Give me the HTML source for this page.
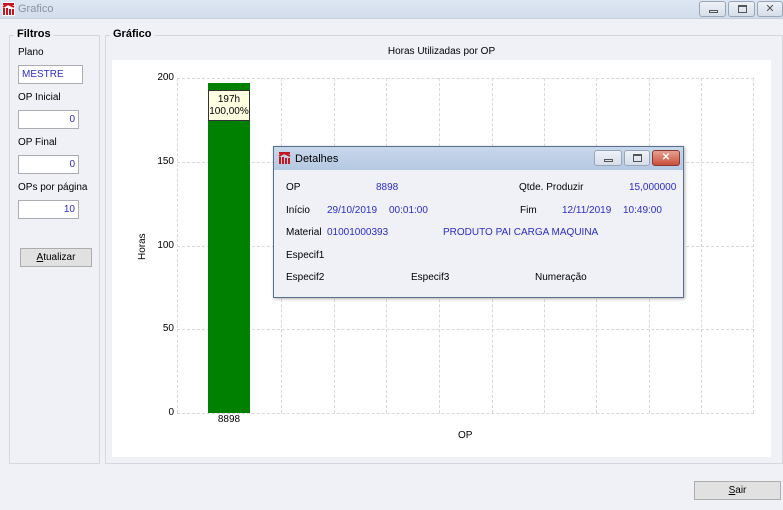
<!DOCTYPE html>
<html><head><style>
*{box-sizing:border-box;margin:0;padding:0}
body{width:783px;height:510px;background:#f0f1f7;font-family:"Liberation Sans",sans-serif;font-size:10px;color:#000;position:relative;overflow:hidden}
.a{position:absolute}
.tb{left:0;top:0;width:783px;height:19px;background:linear-gradient(#dde6f2,#d2ddec);border-bottom:1px solid #c5cfdc}
.wb{border:1px solid #9aa6b8;border-radius:3px;background:linear-gradient(#eef2f8,#d6dee9);height:16px}
.grp{border:1px solid #d5d7dc}
.lg{background:#f0f1f7;font-weight:bold;padding:0 3px;font-size:11px}
.inp{background:#fff;border:1px solid #abadb3;color:#2c2cc8;height:19px;line-height:17px;padding:0 3px}
.btn{background:#e1e1e1;border:1px solid #adadad;text-align:center;height:19px;line-height:17px}
.gv{border-left:1px dashed #d8d8d8;width:0}
.gh{border-top:1px dashed #d8d8d8;height:0}
.v{color:#2c2cc8}
</style></head><body>
<div class="a tb"></div>
<svg class="a" style="left:2px;top:2px" width="13" height="14"><rect width="13" height="14" fill="#fff"/><path d="M1 2h11M1 5l5-3 6 3M2 6v7M5 6v7M8 7v6M11 7v6" stroke="#c4161c" stroke-width="2" fill="none"/></svg>
<div class="a" style="left:18px;top:3px;color:#8a93a0;font-size:11px">Grafico</div>
<div class="a wb" style="left:699px;top:1px;width:27px"><div class="a" style="left:9px;top:8px;width:9px;height:3px;border:1px solid #555"></div></div>
<div class="a wb" style="left:728px;top:1px;width:27px"><div class="a" style="left:9px;top:3px;width:9px;height:8px;border:1px solid #555;border-top-width:2px"></div></div>
<div class="a wb" style="left:757px;top:1px;width:26px;text-align:center;font-size:11px;line-height:14px;color:#555">✕</div>

<div class="a grp" style="left:9px;top:35px;width:91px;height:429px"></div>
<div class="a lg" style="left:14px;top:28px">Filtros</div>
<div class="a" style="left:18px;top:47px">Plano</div>
<div class="a inp" style="left:18px;top:65px;width:65px">MESTRE</div>
<div class="a" style="left:18px;top:92px">OP Inicial</div>
<div class="a inp" style="left:18px;top:110px;width:61px;text-align:right">0</div>
<div class="a" style="left:18px;top:137px">OP Final</div>
<div class="a inp" style="left:18px;top:155px;width:61px;text-align:right">0</div>
<div class="a" style="left:18px;top:182px">OPs por página</div>
<div class="a inp" style="left:18px;top:200px;width:61px;text-align:right">10</div>
<div class="a btn" style="left:20px;top:248px;width:72px"><u>A</u>tualizar</div>

<div class="a grp" style="left:105px;top:35px;width:678px;height:429px"></div>
<div class="a lg" style="left:110px;top:28px">Gráfico</div>
<div class="a" style="left:112px;top:60px;width:659px;height:397px;background:#fff"></div>
<div class="a" style="left:112px;top:46px;width:659px;text-align:center;font-size:10px">Horas Utilizadas por OP</div>

<div class="a gh" style="left:177px;top:78px;width:577px"></div>
<div class="a gh" style="left:177px;top:162px;width:577px"></div>
<div class="a gh" style="left:177px;top:246px;width:577px"></div>
<div class="a gh" style="left:177px;top:329px;width:577px"></div>
<div class="a gh" style="left:177px;top:413px;width:577px"></div>
<div class="a gv" style="left:177px;top:78px;height:335px"></div>
<div class="a gv" style="left:281px;top:78px;height:335px"></div>
<div class="a gv" style="left:334px;top:78px;height:335px"></div>
<div class="a gv" style="left:386px;top:78px;height:335px"></div>
<div class="a gv" style="left:439px;top:78px;height:335px"></div>
<div class="a gv" style="left:492px;top:78px;height:335px"></div>
<div class="a gv" style="left:544px;top:78px;height:335px"></div>
<div class="a gv" style="left:596px;top:78px;height:335px"></div>
<div class="a gv" style="left:649px;top:78px;height:335px"></div>
<div class="a gv" style="left:701px;top:78px;height:335px"></div>
<div class="a gv" style="left:753px;top:78px;height:335px"></div>
<div class="a" style="left:150px;top:72px;width:24px;text-align:right">200</div>
<div class="a" style="left:150px;top:156px;width:24px;text-align:right">150</div>
<div class="a" style="left:150px;top:240px;width:24px;text-align:right">100</div>
<div class="a" style="left:150px;top:323px;width:24px;text-align:right">50</div>
<div class="a" style="left:150px;top:407px;width:24px;text-align:right">0</div>
<div class="a" style="left:137px;top:260px;transform:rotate(-90deg);transform-origin:left top">Horas</div>
<div class="a" style="left:208px;top:83px;width:42px;height:330px;background:#008000"></div>
<div class="a" style="left:208px;top:90px;width:42px;height:31px;background:#ffffe1;border:1px solid #333;text-align:center;line-height:12px;padding-top:3px">197h<br>100,00%</div>
<div class="a" style="left:208px;top:414px;width:42px;text-align:center;font-size:10px">8898</div>
<div class="a" style="left:458px;top:430px">OP</div>

<div class="a btn" style="left:694px;top:481px;width:87px"><u>S</u>air</div>

<div class="a" style="left:273px;top:146px;width:411px;height:152px;background:#f0f1f7;border:1px solid #5a6f8e;box-shadow:1px 1px 3px rgba(0,0,0,.3)"></div>
<div class="a" style="left:274px;top:147px;width:409px;height:23px;background:linear-gradient(#c8d8ec,#b5c9e2)"></div>
<svg class="a" style="left:278px;top:151px" width="13" height="14"><path d="M1 2h11M1 5l5-3 6 3M2 6v7M5 6v7M8 7v6M11 7v6" stroke="#c4161c" stroke-width="2" fill="none"/></svg>
<div class="a" style="left:295px;top:153px;font-size:11px">Detalhes</div>
<div class="a wb" style="left:594px;top:150px;width:28px"><div class="a" style="left:9px;top:8px;width:9px;height:3px;border:1px solid #555"></div></div>
<div class="a wb" style="left:624px;top:150px;width:26px"><div class="a" style="left:8px;top:3px;width:9px;height:8px;border:1px solid #555;border-top-width:2px"></div></div>
<div class="a" style="left:652px;top:150px;width:28px;height:16px;border:1px solid #8a3a30;border-radius:3px;background:linear-gradient(#e6a090,#c8503c);color:#fff;text-align:center;line-height:14px;font-weight:bold">✕</div>
<div class="a" style="left:286px;top:182px">OP</div>
<div class="a v" style="left:376px;top:182px">8898</div>
<div class="a" style="left:519px;top:182px">Qtde. Produzir</div>
<div class="a v" style="left:629px;top:182px">15,000000</div>
<div class="a" style="left:286px;top:205px">Início</div>
<div class="a v" style="left:327px;top:205px">29/10/2019</div>
<div class="a v" style="left:389px;top:205px">00:01:00</div>
<div class="a" style="left:520px;top:205px">Fim</div>
<div class="a v" style="left:562px;top:205px">12/11/2019</div>
<div class="a v" style="left:623px;top:205px">10:49:00</div>
<div class="a" style="left:286px;top:227px">Material</div>
<div class="a v" style="left:327px;top:227px">01001000393</div>
<div class="a v" style="left:443px;top:227px">PRODUTO PAI CARGA MAQUINA</div>
<div class="a" style="left:286px;top:250px">Especif1</div>
<div class="a" style="left:286px;top:272px">Especif2</div>
<div class="a" style="left:411px;top:272px">Especif3</div>
<div class="a" style="left:535px;top:272px">Numeração</div>
</body></html>
